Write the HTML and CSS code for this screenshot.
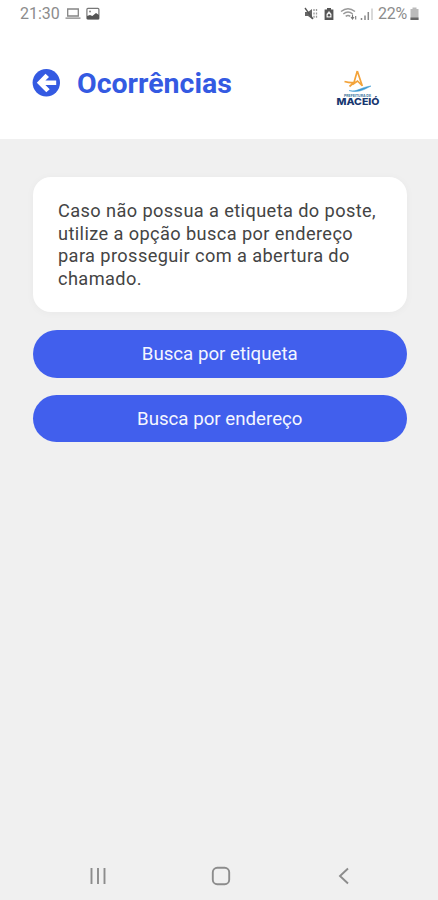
FILE: index.html
```html
<!DOCTYPE html>
<html lang="pt-BR">
<head>
<meta charset="utf-8">
<meta name="viewport" content="width=device-width">
<title>Ocorrências</title>
<link rel="stylesheet" href="styles.css">
</head>
<body>
<div class="screen">
  <div class="status">
    <span class="time">21:30</span>
    <svg class="laptop" width="16" height="14" viewBox="0 0 16 14"><path d="M2.700 2h10.600v7H2.700zM.5 11.200h15" fill="none" stroke="#858585" stroke-width="1.300"/></svg>
    <svg class="photo" width="14" height="14" viewBox="0 0 14 14"><rect x=".9" y="1.400" width="12" height="10.800" rx="1" fill="none" stroke="#777" stroke-width="1.200"/><path d="M1 12V9l3-1 2.300 1L10 6l3 2v4z" fill="#555"/><circle cx="4" cy="4.500" r="1" fill="#888"/></svg>
    <svg class="mute" width="14" height="14" viewBox="0 0 14 14"><path d="M1 5h3l4-3v10L4 9H1z" fill="#666"/><path d="M1 1l8 11" stroke="#555" stroke-width="1.300"/><path d="M10 2v10M12.500 2v10" stroke="#999" stroke-width="1.300" stroke-dasharray="2 1.400"/></svg>
    <svg class="saver" width="10" height="14" viewBox="0 0 10 14"><path d="M3 1h4v1.400h2.400V13H.6V2.400H3z" fill="#555"/><path d="M5 4L2.500 7v3.500h5V7z" fill="#eee"/><circle cx="5" cy="8.300" r="1.200" fill="#555"/></svg>
    <svg class="wifi" width="18" height="14" viewBox="0 0 18 14"><path d="M1 4.500Q8 -1.200 15 4.500M3.300 7q4.700-3.800 9.400 0M5.700 9.400q2.300-1.900 4.600 0" fill="none" stroke="#999" stroke-width="1.500"/><path d="M12.500 7.500v4M11 10l1.500 2 1.500-2M15.700 12.500V9" fill="none" stroke="#777" stroke-width="1.100"/></svg>
    <svg class="signal" width="14" height="14" viewBox="0 0 14 14"><path d="M1.500 13v-2M5 13V8.500M8.300 13V5" stroke="#888" stroke-width="1.500"/><path d="M12 13V1.500" stroke="#ccc" stroke-width="1.500"/></svg>
    <span class="percent">22%</span>
    <svg class="battery" width="9" height="14" viewBox="0 0 9 14"><path d="M2.500.5h4V2h2v11h-8V2h2z" fill="#bbb"/><path d="M.5 10.500h8V13h-8z" fill="#666"/></svg>
  </div>
  <header class="header">
    <svg class="back" width="28" height="28" viewBox="0 0 28 28"><circle cx="14.300" cy="13.800" r="13.700" fill="#345ae2"/><path d="M4.800 13.700l8.700-9 3.500 3.200-3.600 3.700h10.800v4.300H13.400l4.300 4.300-3.400 3z" fill="#fff"/></svg>
    <h1 class="title">Ocorrências</h1>
    <svg class="logo" width="46" height="38" viewBox="0 0 46 38"><path d="M22.300 2L19 13.500l-4.500 4M22.300 2l5 15M9.500 12.500q7 2 11.500.5M17.500 15.500l5-3.500 4.500 4.500" fill="none" stroke="#f3a33a" stroke-width="1.700"/><path d="M14 21.500c8 2 12-3.500 22-4.500C30 20 24 24.500 14 21.500z" fill="#3c9ad3" stroke="#3c9ad3" stroke-width=".5"/><text class="logo-small" x="9" y="27.500" textLength="27" lengthAdjust="spacingAndGlyphs">PREFEITURA DE</text><text class="logo-name" x="1.500" y="36" textLength="43" lengthAdjust="spacingAndGlyphs">MACEIÓ</text></svg>
  </header>
  <main class="content">
    <p class="card">Caso não possua a etiqueta do poste,<br>utilize a opção busca por endereço<br>para prosseguir com a abertura do<br>chamado.</p>
    <button class="button">Busca por etiqueta</button>
    <button class="button">Busca por endereço</button>
  </main>
  <nav class="nav">
    <svg width="20" height="20" viewBox="0 0 20 20"><path d="M3.500 2v16M10 2v16M16.500 2v16" stroke="#8c8c8c" stroke-width="1.900"/></svg>
    <svg width="20" height="20" viewBox="0 0 20 20"><rect x="1.800" y="1.800" width="16.400" height="16.400" rx="4.500" fill="none" stroke="#8c8c8c" stroke-width="1.900"/></svg>
    <svg width="20" height="20" viewBox="0 0 20 20"><path d="M14 2.500L6 10l8 7.500" fill="none" stroke="#8c8c8c" stroke-width="1.900"/></svg>
  </nav>
</div>
</body>
</html>
```
FILE: styles.css
```css
* { box-sizing: border-box; }
body { margin: 0; background: #f0f0f0; font-family: Roboto, sans-serif; }
.screen { display: flex; flex-direction: column; height: 900px; }
.status { display: flex; align-items: center; height: 27px; padding: 0 19px 0 20px; background: #fff; color: #8c8c8c; font-size: 16px; line-height: 27px; }
.time { width: 45px; }
.photo { margin-left: 5px; }
.mute { margin-left: auto; }
.saver { margin-left: 6px; }
.wifi { margin-left: 6px; }
.signal { margin-left: 2px; }
.percent { margin-left: 4px; width: 31px; letter-spacing: -.3px; }
.battery { margin-left: 1px; }
.header { display: flex; align-items: center; height: 112px; padding: 0 57px 0 32px; background: #fff; }
.back { margin-top: 0; }
.title { margin: 2px 0 0 17px; color: #345ae2; font-size: 28.500px; line-height: 34px; font-weight: 700; }
.logo { margin: 10px 0 0 auto; }
.logo-small { font: 700 3.500px Inter, sans-serif; fill: #40779e; }
.logo-name { font: 800 9.500px Inter, sans-serif; fill: #17366f; }
.content { flex: 1; display: flex; flex-direction: column; padding: 38px 31px 0 32.500px; }
.card { height: 135px; margin: 0 0 18px; padding: 23px 25.500px; border-radius: 18px; background: #fff; box-shadow: 0 1px 8px rgba(0,0,0,.035); color: #444; font-size: 18.200px; line-height: 22.500px; letter-spacing: .4px; white-space: nowrap; }
.button { height: 47.500px; margin: 0 0 17px; padding: 1px 0 0; border: 0; border-radius: 24px; background: #415fed; color: #f4f6ff; font: 400 18.700px/24px Roboto, sans-serif; }
.nav { display: flex; justify-content: space-between; align-items: center; height: 48px; padding: 0 84px 0 88px; }
```
